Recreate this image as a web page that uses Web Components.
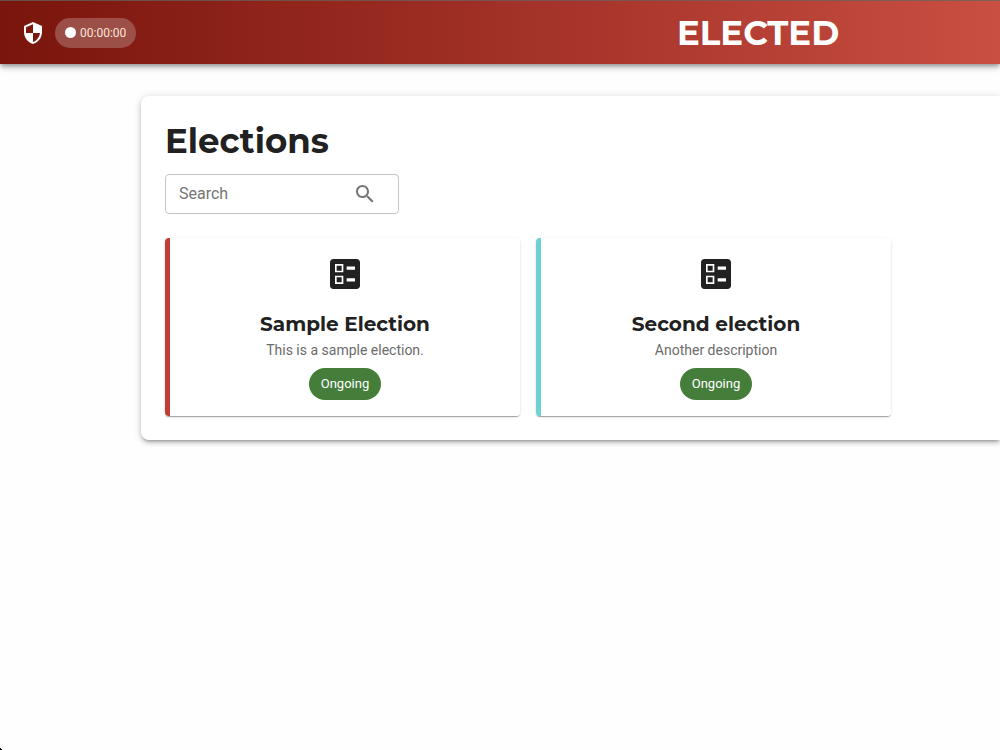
<!DOCTYPE html>
<html lang="en">
<head>
<meta charset="utf-8">
<meta name="viewport" content="width=device-width, initial-scale=1">
<title>Elected</title>
<style>
html { background: #fefefe; }
body { margin: 0; color: #212121; font-family: Roboto, "Liberation Sans", sans-serif; --heading: Montserrat, Inter, sans-serif; }
</style>
</head>
<body>
<elected-app>
  <elected-header slot="header">ELECTED</elected-header>
  <elected-panel>
    <span slot="title">Elections</span>
    <elected-search></elected-search>
    <election-list>
      <election-card style="--accent:#bf3f36">
        <span slot="name">Sample Election</span>
        <span slot="description">This is a sample election.</span>
        <status-chip slot="status">Ongoing</status-chip>
      </election-card>
      <election-card style="--accent:#6fd1d1">
        <span slot="name">Second election</span>
        <span slot="description">Another description</span>
        <status-chip slot="status">Ongoing</status-chip>
      </election-card>
    </election-list>
  </elected-panel>
</elected-app>
<script>
function define(name, html) {
  const template = document.createElement('template');
  template.innerHTML = html;
  customElements.define(name, class extends HTMLElement {
    constructor() {
      super();
      this.attachShadow({ mode: 'open' }).append(template.content.cloneNode(true));
    }
  });
}

define('elected-app', `
<style>
:host { display: block; overflow: clip; }
main { padding: 32px 0 32px 14.1%; }
.corner { position: fixed; left: 0; bottom: 0; width: 3px; height: 3px; background: linear-gradient(45deg, #000 50%, transparent 50%); }
</style>
<slot name="header"></slot>
<main><slot></slot></main>
<div class="corner"></div>`);

define('elected-header', `
<style>
:host { display: block; }
header { display: grid; grid-template-columns: 67.7% auto; align-items: center; height: 64px; box-sizing: border-box; color: #fff;
  border-top: 1px solid rgba(100, 100, 100, .7);
  background: linear-gradient(90deg, #79150c, #ac382e 64%, #c94f42) border-box;
  box-shadow: 0 2px 4px -1px rgba(0,0,0,.3), 0 4px 5px rgba(0,0,0,.16), 0 1px 10px rgba(0,0,0,.12); }
.left { display: flex; align-items: center; gap: 10px; padding: 0 21px; }
svg { display: block; width: 24px; height: 24px; fill: currentColor; }
h1 { margin: 0; font: 700 34px/40px var(--heading); }
</style>
<header>
  <div class="left">
    <svg viewBox="0 0 24 24" aria-hidden="true"><path d="M12 1 3 5v6c0 5.550 3.840 10.740 9 12 5.160-1.260 9-6.450 9-12V5l-9-4zm0 10.990h7c-.53 4.120-3.280 7.790-7 8.940V12H5V6.300l7-3.110v8.800z"/></svg>
    <session-timer>00:00:00</session-timer>
  </div>
  <h1><slot></slot></h1>
</header>`);

define('session-timer', `
<style>
:host { display: flex; align-items: center; gap: 4px; height: 30px; padding: 0 10px; border-radius: 15px; background: rgba(181, 132, 125, .5); color: #fff; font-size: 12px; line-height: 16px; }
i { width: 11px; height: 11px; border-radius: 50%; background: #fff; }
span { color: #fbe4da; }
</style>
<i></i><span><slot></slot></span>`);

define('elected-panel', `
<style>
:host { display: block; padding: 24px; border-radius: 8px 0 0 8px; background: #fff; box-shadow: 0 3px 3px -2px rgba(0,0,0,.24), 0 3px 4px rgba(0,0,0,.16), 0 1px 8px rgba(0,0,0,.14); }
h2 { margin: 0 0 12px; font: 700 34px/42px var(--heading); }
</style>
<h2><slot name="title"></slot></h2>
<slot></slot>`);

define('elected-search', `
<style>
:host { display: flex; align-items: center; box-sizing: border-box; width: 234px; height: 40px; margin-bottom: 24px; padding: 0 21px 0 13px; border: 1px solid #c4c4c4; border-radius: 4px; }
input { flex: 1; min-width: 0; padding: 0; border: 0; outline: 0; background: none; color: inherit; font: 16px/24px Roboto, sans-serif; }
input::placeholder { color: #757575; opacity: 1; }
:host(:focus-within) { border-color: #bf3f36; }
svg { display: block; width: 24px; height: 24px; fill: #757575; }
</style>
<input type="text" placeholder="Search" aria-label="Search">
<svg viewBox="0 0 24 24" aria-hidden="true"><path d="M15.500 14h-.79l-.28-.27C15.410 12.590 16 11.110 16 9.500 16 5.910 13.090 3 9.500 3S3 5.910 3 9.500 5.910 16 9.500 16c1.610 0 3.090-.59 4.230-1.570l.27.28v.79l5 4.990L20.490 19l-4.990-5zm-6 0C7.010 14 5 11.990 5 9.500S7.010 5 9.500 5 14 7.010 14 9.500 11.990 14 9.500 14z"/></svg>`);

define('election-list', `
<style>
:host { display: grid; grid-template-columns: repeat(auto-fill, minmax(0, 355px)); gap: 16px; }
</style>
<slot></slot>`);

define('election-card', `
<style>
:host { display: block; }
article { display: flex; flex-direction: column; align-items: center; padding: 16px 0 16px 5px; text-align: center; border-radius: 4px;
  background: linear-gradient(90deg, var(--accent) 5px, #fff 5px);
  box-shadow: 0 2px 1px -1px rgba(0,0,0,.2), 0 1px 1px rgba(0,0,0,.14), 0 1px 3px rgba(0,0,0,.12); }
svg { display: block; width: 40px; height: 40px; fill: #212121; margin-bottom: 16px; }
h3 { margin: 0; font: 700 20px/28px var(--heading); }
p { margin: 0 0 6px; color: #6b6b6b; font-size: 14px; line-height: 24px; }
</style>
<article>
  <svg viewBox="0 0 24 24" aria-hidden="true"><path d="M13 9.500h5v-2h-5v2zm0 7h5v-2h-5v2zm6 4.500H5c-1.100 0-2-.9-2-2V5c0-1.100.9-2 2-2h14c1.100 0 2 .9 2 2v14c0 1.100-.9 2-2 2zM6 11h5V6H6v5zm1-4h3v3H7V7zM6 18h5v-5H6v5zm1-4h3v3H7v-3z"/></svg>
  <h3><slot name="name"></slot></h3>
  <p><slot name="description"></slot></p>
  <slot name="status"></slot>
</article>`);

define('status-chip', `
<style>
:host { display: flex; align-items: center; height: 32px; padding: 0 12px; border-radius: 16px; background: #457e3b; color: #fff; font-size: 13px; line-height: 20px; }
</style>
<slot></slot>`);
</script>
</body>
</html>
